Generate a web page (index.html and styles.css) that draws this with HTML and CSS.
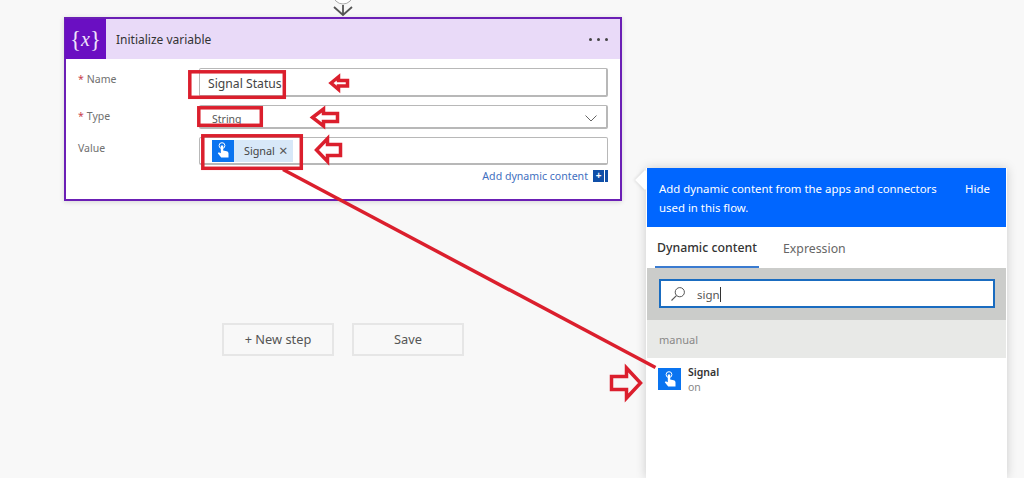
FILE: index.html
```html
<!DOCTYPE html>
<html lang="en">
<head>
<meta charset="utf-8">
<title>Initialize variable</title>
<link rel="stylesheet" href="styles.css">
</head>
<body>
<div class="canvas">
  <main class="flow">
    <svg class="connector" width="30" height="17" viewBox="0 0 30 17"><circle cx="15" cy="-6" r="10" fill="#fff" stroke="#aaa"/><path d="M15 5V15M6 7l9 8 9-8" fill="none" stroke="#555" stroke-width="1.8"/></svg>
    <section class="card">
      <header class="card-head">
        <div class="card-icon"><span class="brace">{</span><span class="x">x</span><span class="brace">}</span></div>
        <h1 class="card-title">Initialize variable</h1>
        <div class="more"><i></i><i></i><i></i></div>
      </header>
      <div class="card-body">
        <div class="row row-name">
          <label class="label"><b>*</b>Name</label>
          <div class="field field-name">Signal Status</div>
        </div>
        <div class="row row-type">
          <label class="label"><b>*</b>Type</label>
          <div class="field field-type"><span>String</span>
            <svg width="12" height="7" viewBox="0 0 12 7"><path d="M.5.5L6 6 11.500.5" fill="none" stroke="#666"/></svg>
          </div>
        </div>
        <div class="row row-value">
          <label class="label">Value</label>
          <div class="field field-value">
            <div class="chip">
              <span class="tile tile-chip"><svg width="14" height="17" viewBox="0 0 14 17"><circle cx="6" cy="3.600" r="2.900" fill="none" stroke="#fff"/><path d="M4.800 3.500h2.400v5l3.500.8c1.100.3 1.800 1 1.800 2.200v4H5.200L1.800 11.300l1-1.100 2 1z" fill="#fff"/></svg></span>
              <span class="chip-text">Signal</span>
              <span class="chip-x">×</span>
            </div>
          </div>
        </div>
        <div class="add-line">
          <a class="add-link">Add dynamic content</a>
          <span class="add-icon"><span>+</span></span>
        </div>
      </div>
    </section>
    <div class="actions">
      <button class="btn">+ New step</button>
      <button class="btn">Save</button>
    </div>
  </main>

  <aside class="panel">
    <span class="beak"></span>
    <div class="panel-head">
      <p>Add dynamic content from the apps and connectors used in this flow.</p>
      <span class="hide">Hide</span>
    </div>
    <div class="tabs">
      <span class="tab tab-on">Dynamic content</span>
      <span class="tab">Expression</span>
    </div>
    <div class="search-band">
      <div class="search">
        <svg width="16" height="16" viewBox="0 0 16 16"><circle cx="9.800" cy="6.200" r="4.600" fill="none" stroke="#555"/><path d="M6.400 9.600L1.500 14.500" stroke="#555" stroke-width="1.100"/></svg>
        <span class="query">sign</span><span class="caret"></span>
      </div>
    </div>
    <div class="group">manual</div>
    <div class="item">
      <span class="tile tile-item"><svg width="14" height="17" viewBox="0 0 14 17"><circle cx="6" cy="3.600" r="2.900" fill="none" stroke="#fff"/><path d="M4.800 3.500h2.400v5l3.500.8c1.100.3 1.800 1 1.800 2.200v4H5.200L1.800 11.300l1-1.100 2 1z" fill="#fff"/></svg></span>
      <div class="item-text">
        <strong>Signal</strong>
        <span>on</span>
      </div>
    </div>
  </aside>

  <svg class="notes" width="1024" height="478" viewBox="0 0 1024 478">
    <g fill="none" stroke="#db1f2d" stroke-width="3.500">
      <rect x="189.800" y="71.800" width="94.500" height="25.500"/>
      <rect x="198.800" y="107.800" width="62.500" height="17.500"/>
      <rect x="202.800" y="135.800" width="98.500" height="32.500"/>
      <path d="M283 169.500L655.500 367.500"/>
      <path d="M331 83l7.500-6v3.500h9v5.500h-9v3.500z"/>
      <path d="M312.500 117.500l11-8.500v4.500h14v8h-14v4.500z"/>
      <path d="M316.500 150l11-11.500v6h13v11h-13v6z"/>
      <path d="M640.500 383l-14-15v8.500h-15v13h15v8.500z"/>
    </g>
  </svg>
</div>
</body>
</html>
```
FILE: styles.css
```css
* { box-sizing: border-box; }
html, body { margin: 0; padding: 0; }
body { width: 1024px; height: 478px; overflow: hidden; background: #f8f8f8; font-family: "Noto Sans", "Open Sans", sans-serif; color: #444; }
.canvas { position: relative; width: 1024px; height: 478px; overflow: hidden; }
.flow { display: flex; flex-direction: column; width: 558px; margin-left: 64px; }
.connector { display: block; align-self: center; height: 17px; }
.card { height: 184px; border: 2px solid #6b1fb5; background: #fff; box-shadow: 0 1px 5px rgba(0,0,0,.14); }
.card-head { display: flex; align-items: center; height: 40px; background: #e9daf8; }
.card-icon { display: flex; align-items: center; justify-content: center; width: 41px; height: 40px; background: #6a0fc2; color: #f0e4fb; font-family: "Liberation Serif", serif; font-size: 20px; margin-left: -1px; }
.brace { font-size: 23px; line-height: 1; }
.x { font-style: italic; line-height: 1; }
.card-title { margin: 0 0 0 10px; font-size: 12px; font-weight: 400; color: #333; flex: 1; }
.more { display: flex; gap: 5px; margin-right: 12px; }
.more i { width: 3px; height: 3px; border-radius: 50%; background: #444; }
.card-body { display: flex; flex-direction: column; padding: 9px 12px 0 12px; }
.row { display: flex; }
.label { width: 121px; font-size: 10.500px; color: #707070; }
.label b { color: #c8404c; font-weight: 400; margin-right: 3px; }
.field { flex: 1; border: 1px solid #b8b8b8; border-bottom-width: 2px; border-right-width: 2px; border-radius: 2px; display: flex; align-items: center; background: #fff; }
.row-name { height: 29px; margin-bottom: 8px; }
.row-name .label { padding-top: 4px; }
.field-name { padding: 2px 0 0 8px; font-size: 12.200px; color: #444; }
.row-type { height: 24px; margin-bottom: 8px; }
.row-type .label { padding-top: 4px; }
.field-type { justify-content: space-between; padding: 4px 9px 0 12px; font-size: 10.500px; color: #555; }
.row-value { height: 28px; }
.row-value .label { padding-top: 4px; }
.field-value { padding-left: 12px; border-right-width: 1px; }
.chip { display: flex; align-items: center; height: 22px; width: 81px; background: #d8e8f8; }
.tile { display: flex; align-items: center; justify-content: center; background: #0a74f0; }
.tile-chip { width: 22px; height: 22px; }
.chip-text { margin-left: 10px; font-size: 10.800px; color: #444; }
.chip-x { margin-left: 4px; font-size: 15px; line-height: 1; color: #555; }
.add-line { display: flex; justify-content: flex-end; align-items: center; height: 22px; }
.add-link { font-size: 10.600px; color: #3f6fc0; }
.add-icon { display: flex; margin-left: 5px; width: 15px; height: 12px; background: #0f4fa8; border-right: 3px solid #0f4fa8; box-shadow: inset -1px 0 0 #fff; }
.add-icon span { width: 11px; text-align: center; color: #fff; font-size: 10px; line-height: 11px; font-weight: 700; }
.actions { display: flex; gap: 18px; margin: 122px 0 0 158px; }
.btn { width: 112px; height: 33px; border: 2px solid #e6e6e6; background: #f8f8f8; font: 400 12.800px "Noto Sans", "Open Sans", sans-serif; color: #555; padding: 0 0 1px; }
.panel { position: absolute; left: 646px; top: 168px; width: 361px; height: 310px; background: #fff; box-shadow: 0 0 10px rgba(0,0,0,.18); display: flex; flex-direction: column; }
.beak { position: absolute; left: -8px; top: 5px; width: 14px; height: 14px; background: #fff; transform: rotate(45deg); box-shadow: -1px 1px 3px rgba(0,0,0,.1); }
.panel-head { position: relative; display: flex; height: 59px; margin: 0 1px; padding: 11px 13px 0 12px; background: #0066ff; color: #fff; font-size: 11.400px; line-height: 19px; }
.panel-head p { margin: 0; width: 292px; }
.hide { margin-left: 14px; }
.tabs { display: flex; height: 41px; padding-left: 9px; gap: 24px; }
.tab { display: flex; align-items: center; height: 41px; padding-top: 2px; font-size: 12.300px; color: #666; }
.tab-on { color: #333; font-weight: 500; width: 104px; padding: 1px 0 0 2px; border-bottom: 2px solid #3a7bd0; }
.search-band { height: 52px; margin: 0 1px; padding: 11px 11px 0 12px; background: #cbccca; }
.search { display: flex; align-items: center; height: 29px; border: 2px solid #1a6cc0; background: #fff; padding-left: 9px; font-size: 11.500px; color: #555; }
.query { margin-left: 11px; padding-top: 1px; }
.caret { width: 1px; height: 15px; margin-top: 2px; background: #333; }
.group { height: 38px; margin: 0 1px; padding: 12px 0 0 12px; background: #e8e9e7; font-size: 11px; color: #888; }
.item { display: flex; padding: 10px 0 0 12px; }
.tile-item { width: 23px; height: 22px; }
.item-text { display: flex; flex-direction: column; margin-left: 7px; margin-top: -3px; line-height: 15px; font-size: 10.500px; color: #888; }
.item-text strong { font-weight: 600; color: #333; }
.notes { position: absolute; left: 0; top: 0; pointer-events: none; }
```
